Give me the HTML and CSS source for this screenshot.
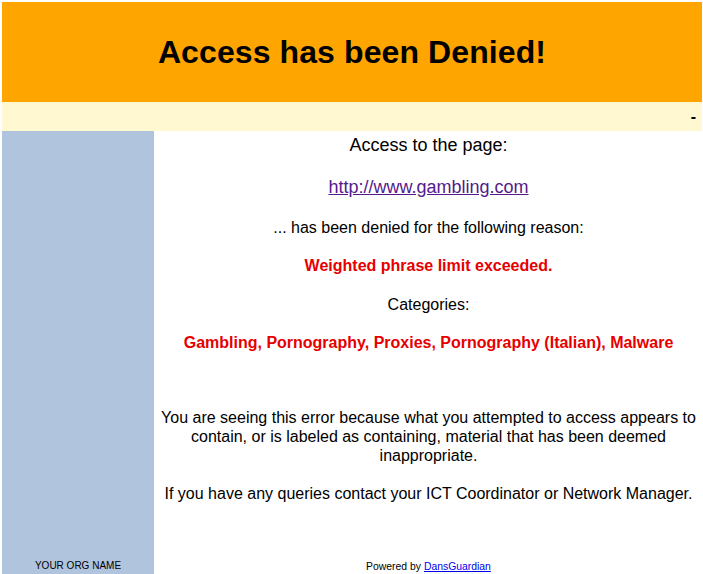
FILE: index.html
```html
<!DOCTYPE html>
<html lang="en">
<head>
<meta charset="UTF-8">
<title>DansGuardian - Access Denied</title>
<link rel="stylesheet" href="styles.css">
</head>
<body>
<div class="banner">
  <h1>Access has been Denied!</h1>
</div>
<div class="subbar"><strong>-</strong></div>
<div class="main">
  <div class="side">
    <div class="org">YOUR ORG NAME</div>
  </div>
  <div class="content">
    <div class="big">Access to the page:</div>
    <div class="big gap"><a href="http://www.gambling.com" class="visited">http://www.gambling.com</a></div>
    <div class="line">... has been denied for the following reason:</div>
    <div class="line reason">Weighted phrase limit exceeded.</div>
    <div class="line">Categories:</div>
    <div class="line reason">Gambling, Pornography, Proxies, Pornography (Italian), Malware</div>
    <div class="line spaced">You are seeing this error because what you attempted to access appears to contain, or is labeled as containing, material that has been deemed inappropriate.</div>
    <div class="line last">If you have any queries contact your ICT Coordinator or Network Manager.</div>
    <div class="footer">Powered by <a href="http://dansguardian.org">DansGuardian</a></div>
  </div>
</div>
</body>
</html>
```

FILE: styles.css
```css
body {
  margin: 2px 1px 0 2px;
  font-family: "Liberation Sans", Arial, sans-serif;
  color: #000;
  background-color: #fff;
  overflow: hidden;
}

.banner {
  height: 100px;
  background-color: #ffa500;
  display: flex;
  justify-content: center;
  align-items: center;
}

.banner h1 {
  margin: 0;
  font-size: 32px;
  font-weight: bold;
  letter-spacing: 0.1px;
}

.subbar {
  height: 29px;
  background-color: #fff8d0;
  display: flex;
  justify-content: flex-end;
  align-items: center;
  padding-right: 6px;
  font-size: 16px;
}

.main {
  display: grid;
  grid-template-columns: 152px 1fr;
  height: 443px;
}

.side {
  background-color: #b0c4de;
  display: flex;
  align-items: flex-end;
  justify-content: center;
}

.org {
  font-size: 10px;
  line-height: 12px;
  padding-bottom: 2px;
}

.content {
  display: flex;
  flex-direction: column;
  text-align: center;
  padding: 3px 5px 0 6px;
}

.big {
  font-size: 18px;
  line-height: 22px;
}

.gap {
  margin-top: 20px;
}

.visited {
  color: #551a8b;
}

.line {
  font-size: 16px;
  line-height: 19px;
  margin-top: 19.5px;
}

.reason {
  color: #e60000;
  font-weight: bold;
}

.spaced {
  margin-top: 56px;
}

.last {
  margin-top: 18.5px;
}

.footer {
  margin-top: auto;
  font-size: 10.4px;
  line-height: 12px;
  padding-bottom: 1px;
}

.footer a {
  color: #0000ee;
}
```
